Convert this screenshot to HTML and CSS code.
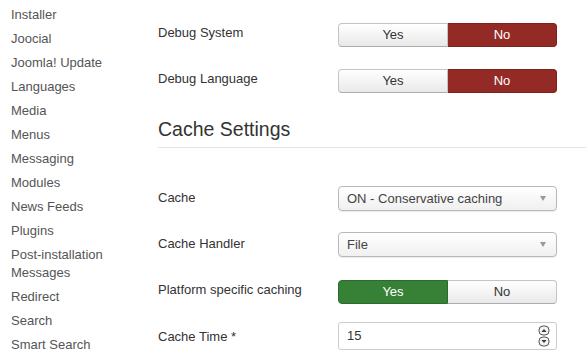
FILE: index.html
```html
<!DOCTYPE html>
<html lang="en">
<head>
  <meta charset="UTF-8" />
  <meta name="viewport" content="width=device-width, initial-scale=1.0" />
  <title>Global Configuration - System</title>
  <link rel="stylesheet" href="styles.css">
</head>

<body>
  <div class="page">
    <ul class="side-nav">
      <li><a href="#">Installer</a></li>
      <li><a href="#">Joocial</a></li>
      <li><a href="#">Joomla! Update</a></li>
      <li><a href="#">Languages</a></li>
      <li><a href="#">Media</a></li>
      <li><a href="#">Menus</a></li>
      <li><a href="#">Messaging</a></li>
      <li><a href="#">Modules</a></li>
      <li><a href="#">News Feeds</a></li>
      <li><a href="#">Plugins</a></li>
      <li><a href="#">Post-installation Messages</a></li>
      <li><a href="#">Redirect</a></li>
      <li><a href="#">Search</a></li>
      <li><a href="#">Smart Search</a></li>
    </ul>

    <div class="main">
      <div class="control-group">
        <label class="control-label">Debug System</label>
        <div class="btn-group">
          <button class="btn">Yes</button>
          <button class="btn btn-danger">No</button>
        </div>
      </div>

      <div class="control-group">
        <label class="control-label">Debug Language</label>
        <div class="btn-group">
          <button class="btn">Yes</button>
          <button class="btn btn-danger">No</button>
        </div>
      </div>

      <h3 class="legend">Cache Settings</h3>

      <div class="control-group">
        <label class="control-label">Cache</label>
        <div class="select">
          <span>ON - Conservative caching</span>
          <b class="caret"></b>
        </div>
      </div>

      <div class="control-group">
        <label class="control-label">Cache Handler</label>
        <div class="select">
          <span>File</span>
          <b class="caret"></b>
        </div>
      </div>

      <div class="control-group extra">
        <label class="control-label">Platform specific caching</label>
        <div class="btn-group">
          <button class="btn btn-success">Yes</button>
          <button class="btn">No</button>
        </div>
      </div>

      <div class="control-group last">
        <label class="control-label">Cache Time *</label>
        <div class="number-input">
          <span>15</span>
          <svg class="spinner" width="12" height="22" viewBox="0 0 12 22">
            <rect x="1" y="1" width="10" height="9" rx="4" fill="#f4f4f4" stroke="#555" stroke-width="1"/>
            <path d="M3.5 7 L6 4 L8.5 7 Z" fill="#333"/>
            <rect x="1" y="12" width="10" height="9" rx="4" fill="#f4f4f4" stroke="#555" stroke-width="1"/>
            <path d="M3.5 15 L6 18 L8.5 15 Z" fill="#333"/>
          </svg>
        </div>
      </div>
    </div>
  </div>
</body>
</html>
```

FILE: styles.css
```css
* {
  margin: 0;
  padding: 0;
  box-sizing: border-box;
}

body {
  font-family: 'Liberation Sans', Arial, sans-serif;
  font-size: 13px;
  line-height: 18px;
  color: #333;
  background-color: #fff;
  overflow: hidden;
}

.page {
  display: grid;
  grid-template-columns: 150px 1fr;
  height: 356px;
}

.side-nav {
  list-style: none;
  padding-top: 3px;
}

.side-nav li a {
  display: block;
  padding: 3px 11px;
  color: #555;
  text-decoration: none;
}

.main {
  padding-left: 8px;
  padding-top: 19px;
}

.control-group {
  display: flex;
  align-items: center;
  height: 28px;
  margin-bottom: 18px;
}

.control-group.extra {
  margin-top: 3px;
}

.control-group.last .control-label {
  padding-top: 2px;
}

.control-label {
  width: 180px;
}

.btn-group {
  display: flex;
  width: 219px;
  height: 24px;
  margin-top: 3px;
}

.btn {
  flex: 1;
  font-family: inherit;
  font-size: 13px;
  color: #333;
  border: 1px solid #c4c4c4;
  border-bottom-color: #acacac;
  background: linear-gradient(#ffffff, #e9e9e9);
  cursor: pointer;
}

.btn:first-child {
  border-radius: 4px 0 0 4px;
}

.btn:last-child {
  border-radius: 0 4px 4px 0;
  border-left: none;
}

.btn-danger {
  color: #fff;
  background: #942a25;
  border-color: #7d221e;
}

.btn-success {
  color: #fff;
  background: #378137;
  border-color: #2d6a2d;
}

.legend {
  font-size: 19.5px;
  font-weight: normal;
  line-height: 36px;
  color: #333;
  border-bottom: 1px solid #e5e5e5;
  margin-bottom: 36px;
}

.select {
  display: flex;
  align-items: center;
  justify-content: space-between;
  width: 219px;
  height: 25px;
  margin-top: 1px;
  padding: 0 8px 0 8px;
  color: #444;
  border: 1px solid #b8b8b8;
  border-radius: 4px;
  background: linear-gradient(#ffffff, #f0f0f0);
  box-shadow: 0 1px 1px rgba(0, 0, 0, 0.08);
}

.caret {
  width: 0;
  height: 0;
  border-left: 3.5px solid transparent;
  border-right: 3.5px solid transparent;
  border-top: 5px solid #999;
  margin-right: 2px;
}

.number-input {
  display: flex;
  align-items: center;
  justify-content: space-between;
  width: 219px;
  height: 28px;
  padding: 0 6px 0 8px;
  color: #333;
  border: 1px solid #ccc;
  border-radius: 3px;
  background-color: #fff;
}

.spinner {
  display: block;
}
```
